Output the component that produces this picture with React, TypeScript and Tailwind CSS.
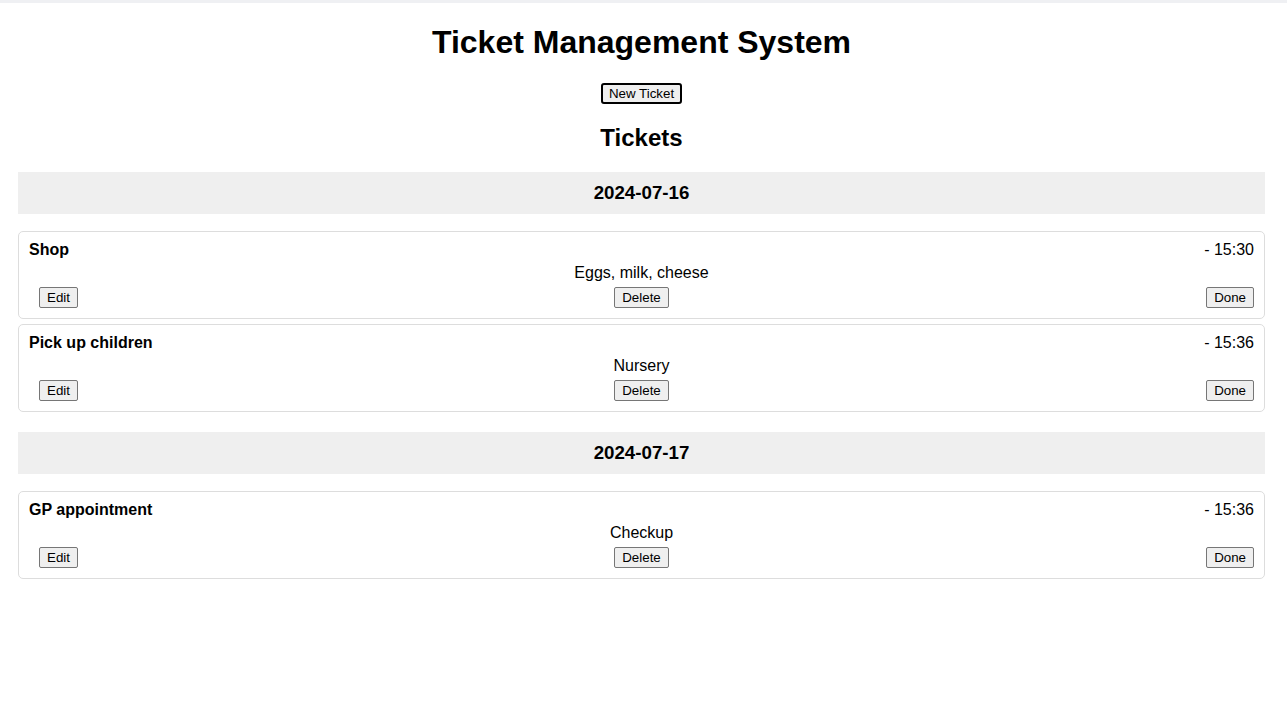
import { useState } from 'react';

type Ticket = {
  id: number;
  title: string;
  description: string;
  date: string;
  time: string;
};

const initialTickets: Ticket[] = [
  { id: 1, title: 'Shop', description: 'Eggs, milk, cheese', date: '2024-07-16', time: '15:30' },
  { id: 2, title: 'Pick up children', description: 'Nursery', date: '2024-07-16', time: '15:36' },
  { id: 3, title: 'GP appointment', description: 'Checkup', date: '2024-07-17', time: '15:36' },
];

const btn =
  "h-[21px] px-[7px] bg-[#efefef] border border-[#767676] rounded-[2px] text-[13.33px] leading-[15px] text-black font-['Liberation_Sans',Arial,sans-serif] cursor-pointer hover:bg-[#e5e5e5]";

export default function App() {
  const [tickets, setTickets] = useState<Ticket[]>(initialTickets);

  // group tickets by date, keep order
  const dates = Array.from(new Set(tickets.map(t => t.date)));

  const remove = (id: number) => setTickets(prev => prev.filter(t => t.id !== id));

  return (
    <div className="min-h-screen bg-white text-black font-['Liberation_Sans',Arial,sans-serif]">
      <div className="h-[3px] bg-[#eff0f3]" />

      <div className="pl-[18px] pr-[22px]">
        <h1 className="mt-[21px] text-center text-[32px] leading-[37px] font-bold">Ticket Management System</h1>

        <div className="mt-[22px] flex justify-center">
          <button className="h-[21px] px-[6px] bg-[#efefef] border-2 border-black rounded-[3px] text-[13.33px] leading-[15px] cursor-pointer">
            New Ticket
          </button>
        </div>

        <h2 className="mt-[20px] text-center text-[24px] leading-[28px] font-bold">Tickets</h2>

        <div className="mt-[20px] flex flex-col gap-[20px]">
          {dates.map(date => (
            <section key={date}>
              <h3 className="h-[42px] flex items-center justify-center bg-[#efefef] text-[18.72px] font-bold">
                {date}
              </h3>

              <div className="mt-[17px] flex flex-col gap-[5px]">
                {tickets
                  .filter(t => t.date === date)
                  .map(t => (
                    <div key={t.id} className="border border-[#dddddd] rounded-[5px] pt-[9px] pb-[10px] px-[10px]">
                      <div className="flex justify-between text-[16px] leading-[18px]">
                        <span className="font-bold">{t.title}</span>
                        <span>- {t.time}</span>
                      </div>
                      <p className="mt-[5px] text-center text-[16px] leading-[18px]">{t.description}</p>
                      <div className="mt-[5px] grid grid-cols-3 items-center">
                        <div className="flex justify-start pl-[10px]">
                          <button className={btn}>Edit</button>
                        </div>
                        <div className="flex justify-center">
                          <button className={btn} onClick={() => remove(t.id)}>Delete</button>
                        </div>
                        <div className="flex justify-end">
                          <button className={btn}>Done</button>
                        </div>
                      </div>
                    </div>
                  ))}
              </div>
            </section>
          ))}
        </div>
      </div>
    </div>
  );
}
